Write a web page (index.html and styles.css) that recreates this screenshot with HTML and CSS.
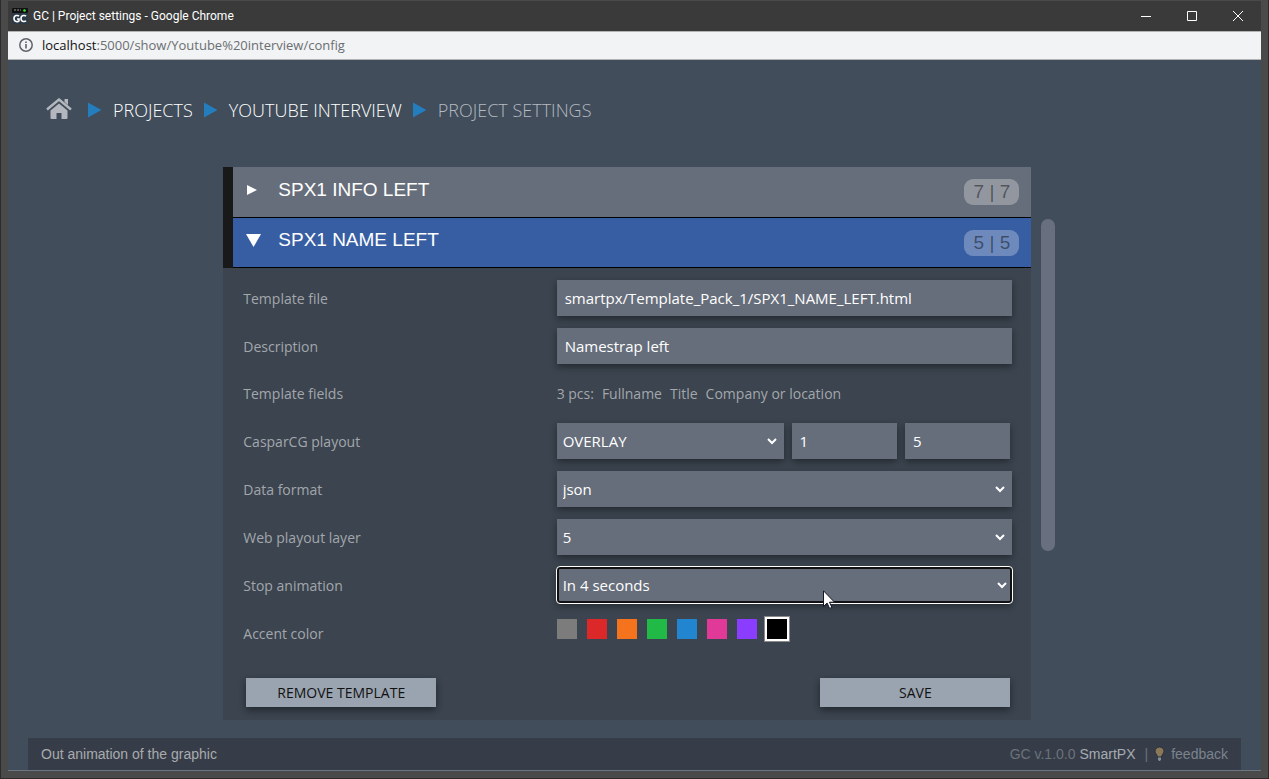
FILE: index.html
```html
<!DOCTYPE html>
<html lang="en">
<head>
<meta charset="utf-8">
<title>GC | Project settings</title>
<link rel="stylesheet" href="styles.css">
</head>
<body>
<div class="window">
  <header class="titlebar">
    <svg class="app-icon" width="16" height="16" viewBox="0 0 16 16" aria-hidden="true">
      <rect width="16" height="16" rx="2" fill="#2c3a48"/>
      <rect width="16" height="5" rx="1" fill="#111"/>
      <path d="M2 2h2M5 2h2M8 2h1" stroke="#999" stroke-width="1"/>
      <circle cx="12.500" cy="2.500" r="1.300" fill="#3de22c"/>
      <path d="M7 8.200C6 7 2 7 2 10.500S6 14 7 13V11H5M14 8.200C13 7 9 7 9 10.500S13 14 14 12.800" fill="none" stroke="#fff" stroke-width="1.600"/>
    </svg>
    <span class="window-title">GC | Project settings - Google Chrome</span>
    <div class="window-controls">
      <button class="window-button" type="button" aria-label="Minimize"><svg width="10" height="10" viewBox="0 0 10 10"><path d="M0 5.500h10"/></svg></button>
      <button class="window-button" type="button" aria-label="Maximize"><svg width="10" height="10" viewBox="0 0 10 10"><path d="M.5.5h9v9h-9z"/></svg></button>
      <button class="window-button" type="button" aria-label="Close"><svg width="10" height="10" viewBox="0 0 10 10"><path d="M0 0l10 10M10 0L0 10"/></svg></button>
    </div>
  </header>
  <div class="urlbar">
    <svg width="14" height="14" viewBox="0 0 14 14" aria-hidden="true"><circle cx="7" cy="7" r="6.200" fill="none" stroke="#5f6368" stroke-width="1.500"/><path d="M7 6v4.500M7 3.500v1.600" stroke="#5f6368" stroke-width="1.600"/></svg>
    <span class="url"><span class="url-host">localhost</span>:5000/show/Youtube%20interview/config</span>
  </div>
  <div class="page">
    <nav class="breadcrumbs" aria-label="Breadcrumb">
      <a class="home" href="#" aria-label="Home"><svg width="26" height="22" viewBox="0 0 26 22"><path d="M1 11.500L13 1.500l12 10" fill="none" stroke="#b4b8be" stroke-width="2.400"/><path d="M18.500 1H22v6l-3.500-3zM13 5.500l8.500 7V20q0 1-1 1H15.500v-6h-5v6H5.500q-1 0-1-1v-7.500z" fill="#b4b8be"/></svg></a>
      <svg class="crumb-arrow" width="14" height="16" viewBox="0 0 14 16"><path d="M0 .5L13.500 8 0 15.500z"/></svg>
      <a class="crumb" href="#">PROJECTS</a>
      <svg class="crumb-arrow" width="14" height="16" viewBox="0 0 14 16"><path d="M0 .5L13.500 8 0 15.500z"/></svg>
      <a class="crumb" href="#">YOUTUBE INTERVIEW</a>
      <svg class="crumb-arrow" width="14" height="16" viewBox="0 0 14 16"><path d="M0 .5L13.500 8 0 15.500z"/></svg>
      <span class="crumb current">PROJECT SETTINGS</span>
    </nav>

    <main class="main">
      <div class="templates">
        <button class="template-head" type="button" aria-expanded="false">
          <svg class="toggle" width="16" height="14" viewBox="0 0 16 14"><path d="M1 2l10 5-10 5z"/></svg>
          <span class="template-name">SPX1 INFO LEFT</span>
          <span class="badge">7 | 7</span>
        </button>
        <button class="template-head open" type="button" aria-expanded="true">
          <svg class="toggle" width="16" height="14" viewBox="0 0 16 14"><path d="M0 1h15L7.500 14z"/></svg>
          <span class="template-name">SPX1 NAME LEFT</span>
          <span class="badge">5 | 5</span>
        </button>
        <form class="settings">
          <div class="row">
            <label for="file">Template file</label>
            <input class="control" id="file" type="text" value="smartpx/Template_Pack_1/SPX1_NAME_LEFT.html">
          </div>
          <div class="row">
            <label for="description">Description</label>
            <input class="control" id="description" type="text" value="Namestrap left">
          </div>
          <div class="row text-row">
            <span>Template fields</span>
            <span class="fields"><span>3 pcs:</span><span>Fullname</span><span>Title</span><span>Company or location</span></span>
          </div>
          <div class="row">
            <label for="server">CasparCG playout</label>
            <div class="playout">
              <select class="control" id="server"><option>OVERLAY</option></select>
              <input class="control" type="text" value="1" aria-label="Channel">
              <input class="control" type="text" value="5" aria-label="Layer">
            </div>
          </div>
          <div class="row">
            <label for="format">Data format</label>
            <select class="control" id="format"><option>json</option></select>
          </div>
          <div class="row">
            <label for="layer">Web playout layer</label>
            <select class="control" id="layer"><option>5</option></select>
          </div>
          <div class="row">
            <label for="stop">Stop animation</label>
            <div class="pointed">
              <select class="control active" id="stop"><option>In 4 seconds</option></select>
              <svg class="pointer" width="12" height="19" viewBox="0 0 12 19" aria-hidden="true"><path d="M.5.8v15.700l3.600-3.500 2.500 5.400 2.300-1-2.400-5.200h5z" fill="#fff" stroke="#111827"/></svg>
            </div>
          </div>
          <div class="row">
            <span id="accent">Accent color</span>
            <div class="swatches" role="radiogroup" aria-labelledby="accent">
              <input class="swatch gray" type="radio" name="accent" aria-label="Gray">
              <input class="swatch red" type="radio" name="accent" aria-label="Red">
              <input class="swatch orange" type="radio" name="accent" aria-label="Orange">
              <input class="swatch green" type="radio" name="accent" aria-label="Green">
              <input class="swatch blue" type="radio" name="accent" aria-label="Blue">
              <input class="swatch pink" type="radio" name="accent" aria-label="Pink">
              <input class="swatch purple" type="radio" name="accent" aria-label="Purple">
              <input class="swatch black" type="radio" name="accent" aria-label="Black" checked>
            </div>
          </div>
          <div class="actions">
            <button class="action" type="button">REMOVE TEMPLATE</button>
            <button class="action" type="button">SAVE</button>
          </div>
        </form>
      </div>
      <div class="scrollbar"></div>
    </main>

    <footer class="footer">
      <span class="hint">Out animation of the graphic</span>
      <span class="version">GC v.1.0.0</span>
      <a class="brand" href="#">SmartPX</a>
      <span class="divider">|</span>
      <a class="feedback" href="#"><svg width="11" height="16" viewBox="0 0 11 16" aria-hidden="true"><path d="M5.500 1C3 1 1 2.800 1 5.200 1 7.500 3.200 8.700 3.600 11h3.800C7.800 8.700 10 7.500 10 5.200 10 2.800 8 1 5.500 1z" fill="#8a7858" stroke="#29303a"/><path d="M4 11.500h3v2L6 15H5l-1-1.500z" fill="#848e98"/></svg>feedback</a>
    </footer>
  </div>
</div>
</body>
</html>
```
FILE: styles.css
```css
* { box-sizing: border-box; }
body { margin: 0; background: #4a4a4a; font-family: "Open Sans", "Noto Sans", sans-serif; font-size: 14px; }
a { text-decoration: none; }
button, input, select { font: inherit; }

.window { display: flex; flex-direction: column; min-height: 100vh; padding: 1px 7px 7px; border: solid #2b2b2b; border-width: 0 1px 1px; }

.titlebar { display: flex; align-items: center; height: 30px; padding-left: 4px; background: #3a3a3a; color: #fff; font: 12px Roboto, sans-serif; }
.window-title { margin-left: 5px; }
.window-controls { display: flex; margin-left: auto; }
.window-button { display: grid; place-items: center; width: 46px; height: 28px; padding: 0; border: 0; background: none; }
.window-button svg { fill: none; stroke: #fff; }

.urlbar { display: flex; align-items: center; gap: 9px; height: 29px; padding: 0 0 2px 11px; border: solid #b3b3b3; border-width: 1px 0; background: #f1f3f4; color: #6b6e72; font: 13px "Open Sans", sans-serif; }
.url-host { color: #111; }

.page { display: flex; flex: 1; flex-direction: column; padding: 32px 20px 0; border-bottom: 1px solid #6b7685; background: #414d5a; }

.breadcrumbs { display: flex; align-items: center; height: 36px; padding-left: 18px; font-size: 18px; font-weight: 300; }
.home { display: flex; margin-right: 16px; padding-bottom: 3px; }
.crumb-arrow { margin-right: 11px; fill: #247dbd; }
.crumb { margin-right: 11px; color: #fff; }
.current { color: #b4bac2; }

.main { display: flex; gap: 10px; padding: 39px 15.3% 0 16.1%; }
.templates { flex: 1; min-width: 0; background: #3b444f; }
.scrollbar { flex: none; width: 14px; height: 332px; margin-top: 52px; border-radius: 7px; background: #687080; }

.template-head { display: flex; align-items: center; width: 100%; height: 51px; padding: 0 12px 6px 13px; border: solid #191919; border-width: 0 0 0 10px; box-shadow: inset 0 -1px #000; background: #676e7b; color: #fff; font: 19px "Liberation Sans", Arial, sans-serif; text-align: left; }
.template-head.open { height: 50px; background: #375ea3; }
.toggle { margin-right: 16px; fill: #fff; }
.template-name { flex: 1; }
.badge { width: 55px; height: 26px; margin-top: 5px; border-radius: 9px; background: rgb(255 255 255 / 28%); color: rgb(0 0 0 / 45%); line-height: 26px; text-align: center; }

.settings { display: grid; gap: 12px; padding: 12px 19px 13px 20px; color: #a3a7ac; }
.row { display: grid; grid-template-columns: 11fr 16fr; align-items: center; min-height: 36px; }
.text-row { min-height: 35px; }
.fields { display: flex; gap: 8px; }
.control { width: 100%; min-width: 0; height: 36px; padding: 0 8px; border: 0; border-radius: 0; background: #676e7b; box-shadow: 0 3px 7px rgb(0 0 0 / 40%); color: #fff; font-size: 15px; }
select.control { padding: 0 2px; border-right: 4px solid #676e7b; }
select.control.active { padding: 0; border: 2px solid #111; border-radius: 3px; outline: 1px solid #fff; }
.playout { display: grid; grid-template-columns: 50% 1fr 1fr; gap: 8px; padding-right: 2px; }
.pointed { position: relative; }
.pointer { position: absolute; top: 23px; left: 266px; }

.swatches { display: flex; gap: 10px; padding-bottom: 8px; }
.swatch { width: 20px; height: 20px; margin: 0; appearance: none; }
.swatch:checked { outline: 1px solid #8b8b8b; outline-offset: 2px; box-shadow: 0 0 0 2px #fff; }
.gray { background: #7c7c7c; }
.red { background: #dc2828; }
.orange { background: #f4731c; }
.green { background: #22ba46; }
.blue { background: #2185d0; }
.pink { background: #e03997; }
.purple { background: #8b3dff; }
.black { background: #000; }

.actions { display: flex; justify-content: space-between; padding: 15px 2px 0 3px; }
.action { width: 190px; height: 29px; padding: 0; border: 0; background: #9aa4b0; box-shadow: 0 3px 7px rgb(0 0 0 / 45%); color: #111; }

.footer { display: flex; align-items: center; height: 32px; margin-top: auto; padding: 0 13px; background: #363d48; color: #6b727b; font: 14px "Liberation Sans", Arial, sans-serif; }
.hint { margin-right: auto; color: #a9abae; }
.brand { margin: 0 9px 0 4px; color: #a6abb2; }
.divider { margin-right: 6px; }
.feedback { display: flex; align-items: center; gap: 6px; color: #7b838d; }
```
